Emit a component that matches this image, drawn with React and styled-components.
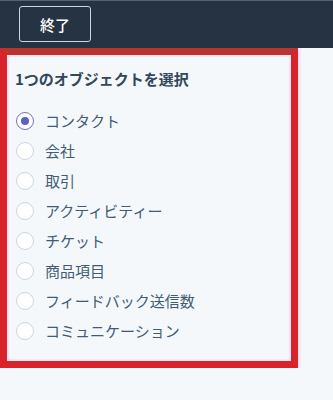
import React, { useState } from "react";
import styled, { createGlobalStyle } from "styled-components";

const Global = createGlobalStyle`
  html, body { margin: 0; padding: 0; background: #f5f8fa; }
  body { font-family: "Noto Sans CJK JP", "Noto Sans", sans-serif; }
  * { box-sizing: border-box; }
`;

const Page = styled.div`
  width: 333px;
  height: 400px;
  background: #f5f8fa;
  display: flex;
  flex-direction: column;
`;

const Header = styled.header`
  height: 48px;
  background: #253342;
  border-top: 1px solid #56616d;
  display: flex;
  align-items: center;
  padding-left: 19px;
`;

const DoneButton = styled.button`
  width: 72px;
  height: 36px;
  margin-top: -1px;
  border: 1px solid #cbd6e2;
  border-radius: 3px;
  background: transparent;
  color: #ffffff;
  font-family: "Noto Sans CJK JP", sans-serif;
  font-size: 15px;
  font-weight: 500;
  display: flex;
  align-items: center;
  justify-content: center;
`;

const Panel = styled.section`
  width: 298px;
  background: #f5f8fa;
  border: 7px solid #d8232a;
  border-top-color: #b8342c;
  box-shadow: inset 0 0 0 2px #fde3f3, 3px 0 0 #fde3f3;
  padding: 14px 2px 15px 2px;
  display: flex;
  flex-direction: column;
`;

const Title = styled.h2`
  margin: 0 0 17px 6px;
  font-size: 15px;
  line-height: 20px;
  font-weight: 700;
  color: #33475b;
`;

const List = styled.div`
  display: flex;
  flex-direction: column;
`;

const Option = styled.label`
  height: 30px;
  display: flex;
  align-items: center;
  gap: 11px;
  padding-left: 7px;
  cursor: pointer;
`;

const Circle = styled.span`
  width: 18px;
  height: 18px;
  border-radius: 50%;
  background: #ffffff;
  border: 1px solid ${(p) => (p.$checked ? "#7b6fb8" : "#cbd6e2")};
  display: flex;
  align-items: center;
  justify-content: center;
  flex-shrink: 0;
  &::after {
    content: "";
    width: 8px;
    height: 8px;
    border-radius: 50%;
    background: #5c62c0;
    display: ${(p) => (p.$checked ? "block" : "none")};
  }
`;

const Label = styled.span`
  font-size: 15px;
  line-height: 20px;
  color: #425b76;
  letter-spacing: 0;
`;

const items = [
  "コンタクト",
  "会社",
  "取引",
  "アクティビティー",
  "チケット",
  "商品項目",
  "フィードバック送信数",
  "コミュニケーション",
];

export default function App() {
  const [sel, setSel] = useState(0);
  return (
    <Page>
      <Global />
      <Header>
        <DoneButton>終了</DoneButton>
      </Header>
      <Panel>
        <Title>1つのオブジェクトを選択</Title>
        <List>
          {items.map((t, i) => (
            <Option key={t} onClick={() => setSel(i)}>
              <Circle $checked={sel === i} />
              <Label>{t}</Label>
            </Option>
          ))}
        </List>
      </Panel>
    </Page>
  );
}
